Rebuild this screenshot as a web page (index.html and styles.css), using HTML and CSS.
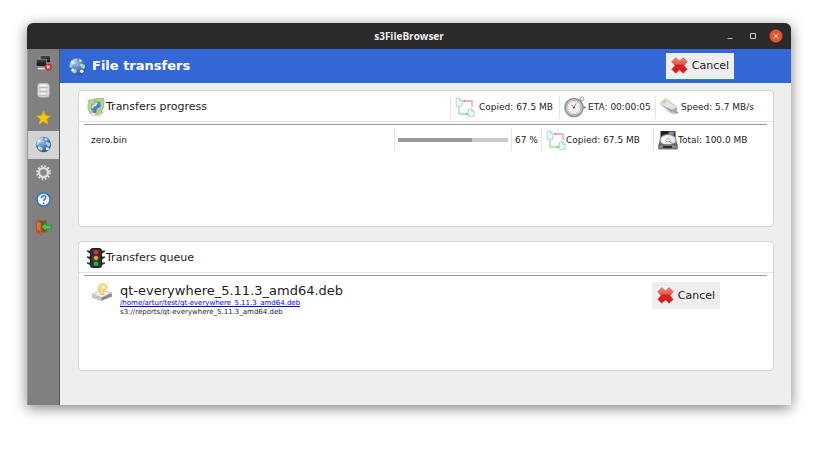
FILE: index.html
```html
<!DOCTYPE html>
<html lang="en">
<head>
<meta charset="utf-8">
<title>s3FileBrowser</title>
<link rel="stylesheet" href="styles.css">
</head>
<body>
<svg class="defs" aria-hidden="true">
  <defs>
    <radialGradient id="globeFill" cx=".4" cy=".3" r=".7"><stop offset="0" stop-color="#9fc0e0"/><stop offset=".6" stop-color="#4a7db5"/><stop offset="1" stop-color="#2a568b"/></radialGradient>
    <linearGradient id="redFill" x1="0" y1="0" x2="0" y2="1"><stop offset="0" stop-color="#f08070"/><stop offset=".42" stop-color="#e55a4c"/><stop offset=".46" stop-color="#e01c20"/><stop offset="1" stop-color="#d81c24"/></linearGradient>
    <linearGradient id="metal" x1="0" y1="0" x2="0" y2="1"><stop offset="0" stop-color="#fafafa"/><stop offset="1" stop-color="#a5a5a5"/></linearGradient>
    <linearGradient id="screen" x1="0" y1="0" x2="0" y2="1"><stop offset="0" stop-color="#4a4a4a"/><stop offset="1" stop-color="#0c0c0c"/></linearGradient>
  </defs>
  <symbol id="globe" viewBox="0 0 20 20">
    <circle cx="10" cy="10" r="9" fill="url(#globeFill)"/>
    <path d="M2 7Q4 2 9 1.600L9.500 3.200 7.500 4.800 8 7 5.500 8.200 4 11 1.500 10.500zM12 8L14.500 7 17.800 8.500 18 11 16 13 14.500 11.500zM4.500 12.500L8 13 9.500 15 7.500 17.700Q4.500 16.500 3 14.500z" fill="#d0e1ef" opacity=".75"/>
    <path d="M12 2.200l3 1.500-1.500 1.600-2-.6z" fill="#eef5fb" opacity=".8"/>
    <circle cx="4.500" cy="5.500" r="1.500" fill="#fff" opacity=".8"/><circle cx="14.500" cy="15" r="1.900" fill="#fff" opacity=".95"/><circle cx="5" cy="13.500" r="1.400" fill="#fff" opacity=".8"/>
  </symbol>
  <symbol id="cross" viewBox="0 0 18 18"><path d="M.8 5L5 .8 9 4.200 13 .8 17.200 5 13.800 9 17.200 13 13 17.200 9 13.800 5 17.200 .8 13 4.200 9z" fill="url(#redFill)" stroke="#c63c3c" stroke-width=".6" stroke-linejoin="round"/></symbol>
  <symbol id="copy" viewBox="0 0 20 20">
    <path d="M8 4H17V10" fill="none" stroke="#f59a9a" stroke-width="1.300"/><path d="M7.500 4l2.500-1.600v3.200z" fill="#ee8585"/>
    <path d="M4 9.500V17H12" fill="none" stroke="#92e592" stroke-width="1.300"/><path d="M13.500 17L11 15.300v3.400z" fill="#74d874"/>
    <path d="M1.200 1.200H4.500L7 3.500V9.200H1.200zM4.500 1.200V3.800H7M13.500 11.800H16.700L19.200 14V19.300H13.500zM16.700 11.800V14.300H19.200" fill="#f6fbff" stroke="#a3d2f4" stroke-width="1"/>
  </symbol>
</svg>
<div class="window">
  <header class="titlebar">
    <span></span>
    <span class="caption">s3FileBrowser</span>
    <div class="controls">
      <button aria-label="Minimize"><svg viewBox="0 0 14 14"><path d="M4.500 9.500h5" stroke="#bbb"/></svg></button>
      <button aria-label="Maximize"><svg viewBox="0 0 14 14"><path d="M4.500 4.500h5v5h-5z" fill="none" stroke="#ccc"/></svg></button>
      <button aria-label="Close"><svg viewBox="0 0 14 14"><circle cx="7" cy="7" r="6.500" fill="#e9542a"/><path d="M4.700 4.700l4.600 4.600M9.300 4.700L4.700 9.300" stroke="#fff"/></svg></button>
    </div>
  </header>
  <div class="workspace">
    <nav class="sidebar">
      <button aria-label="Disconnect"><svg viewBox="0 0 18 18"><path d="M5.500 1.500h11v7.700h-11z" fill="url(#screen)" stroke="#aaa" stroke-width=".7"/><path d="M9 10h6v2H9z" fill="#bbb"/><path d="M1.300 5.500h11v7.500h-11z" fill="url(#screen)" stroke="#a5a5a5" stroke-width=".7"/><path d="M3 14.500h9v1.800H3z" fill="#ddd"/><circle cx="14" cy="13.800" r="3.700" fill="#c92e21"/><path d="M12.600 12.400l2.800 2.800M15.400 12.400l-2.800 2.800" stroke="#fff" stroke-width="1.200"/></svg></button>
      <button aria-label="Storage"><svg viewBox="0 0 18 18"><rect x="3" y="1.500" width="12" height="14.500" rx="2.500" fill="#dcdcdc" stroke="#c4c4c4" stroke-width=".7"/><path d="M4.500 6h9M4.500 10.300h9M4.500 14.500h9" fill="none" stroke="#b2b2b2"/><path d="M5.500 3.500h7M6.500 7.500h5M6.500 12h5" stroke="#fff"/></svg></button>
      <button aria-label="Bookmarks"><svg viewBox="0 0 18 18"><path d="M9 1.800L11.100 6.900 16.500 7.300 12.400 10.900 13.700 16.200 9 13.300 4.300 16.200 5.600 10.900 1.500 7.300 6.900 6.900z" fill="#f4c414" stroke="#d7a800" stroke-width=".5"/></svg></button>
      <button class="active" aria-label="File transfers"><svg><use href="#globe"/></svg></button>
      <button aria-label="Settings"><svg viewBox="0 0 18 18"><circle cx="9" cy="9" r="6.700" fill="none" stroke="#e4e4e4" stroke-width="2.200" stroke-dasharray="1.900 1.600"/><circle cx="9" cy="9" r="4.700" fill="none" stroke="#dfdfdf" stroke-width="2.400"/><circle cx="9" cy="9" r="3.200" fill="#858585" stroke="#aaa" stroke-width=".6"/></svg></button>
      <button aria-label="Help"><svg viewBox="0 0 18 18"><circle cx="9" cy="9" r="6.900" fill="#f8fbff" stroke="#3771ce" stroke-width="1.700"/><path d="M6.800 7.300Q6.800 5 9.100 5T11.300 7Q11.300 8.200 10 9 9 9.700 9 10.700" fill="none" stroke="#3973c9" stroke-width="1.600"/><circle cx="9" cy="12.900" r="1" fill="#3973c9"/></svg></button>
      <button aria-label="Exit"><svg viewBox="0 0 18 18"><path d="M2 1.500H12V14H2z" fill="#665849" stroke="#986035"/><path d="M1.500 1.500L6.500 4.500V17L1.500 13.800z" fill="#d9742c" stroke="#a94e20" stroke-width=".7"/><path d="M2.500 11l3 2v2.500l-3-2z" fill="#bd4620"/><path d="M7 8.300L11.500 4V6.700H17.300V10.500H11.500V12.800z" fill="#48cc48" stroke="#198c29" stroke-width=".7"/></svg></button>
    </nav>
    <main class="main">
      <div class="banner">
        <svg><use href="#globe"/></svg>
        <h1>File transfers</h1>
        <button class="cancel cancel-all"><svg><use href="#cross"/></svg>Cancel</button>
      </div>
      <div class="panels">
        <section class="panel">
          <div class="panel-head">
            <svg class="head-icon" viewBox="0 0 20 20"><ellipse cx="10" cy="18.300" rx="6.500" ry="1.200" fill="#ddd"/><circle cx="9.500" cy="9.700" r="6.500" fill="#4c80b4"/><path d="M7 7l3-2 2 1-2 3-2 .5-1 2-2-1zM11 12l3-2 1 1-2 3-3 1z" fill="#cfe0e8"/><path d="M4.500 17Q0 11 3 5L1.500 3.500 9 2 8 7.500 6 6.500Q3.500 10 7 15zM9 2Q14 .5 18 1.500L17.500 4Q19 10 15.500 14.500L17 16 9.500 18 11 12.500 13 13.500Q15.500 9 14 5Q11 4 9 5z" fill="#b0d494" stroke="#8ab16f" stroke-width=".6"/></svg>
            <h2>Transfers progress</h2>
            <div class="cell sum-copied"><svg><use href="#copy"/></svg>Copied: 67.5 MB</div>
            <div class="cell sum-eta"><svg viewBox="0 0 22 22"><path d="M16 4l2-1" stroke="#aaa" stroke-width="2"/><circle cx="18.500" cy="3" r="2" fill="#eee" stroke="#aaa"/><path d="M20 11.500h2" stroke="#555" stroke-width="1.600"/><circle cx="10.500" cy="11.500" r="9" fill="#ddd" stroke="#8c8c8c" stroke-width="1.500"/><circle cx="10.500" cy="11.500" r="7.200" fill="#f1f0ee" stroke="#aaa"/><circle cx="10.500" cy="11.500" r="5.700" fill="none" stroke="#aaa" stroke-dasharray=".7 2.280"/><path d="M7.500 8.500l3 3 2-4" fill="none" stroke="#c98a74"/><circle cx="10.500" cy="11.500" r="1" fill="#733"/></svg>ETA: 00:00:05</div>
            <div class="cell sum-speed"><svg viewBox="0 0 20 20"><path d="M5 13l9 5 5-3-7-2z" fill="#aaa" opacity=".5"/><path d="M1 5.500Q3 2.500 6.500 2L17 10.500 16.500 14 12 15.500 1.500 8z" fill="#e4e4e4" stroke="#aaa" stroke-width=".7"/><path d="M1.500 8L12 15.500 16.500 14 17 10.500 12 12.500z" fill="#aaa"/><path d="M14 14.500l4 1.500" stroke="#999" stroke-width="1.400"/><path d="M2.500 5L5 3l2 1.700-2.500 2.100z" fill="#f3c263"/></svg>Speed: 5.7 MB/s</div>
          </div>
          <div class="panel-body">
            <div class="transfer">
              <span class="file">zero.bin</span>
              <div class="cell job-bar"><progress value="67" max="100" aria-label="zero.bin progress"></progress></div>
              <div class="cell job-percent">67 %</div>
              <div class="cell job-copied"><svg><use href="#copy"/></svg>Copied: 67.5 MB</div>
              <div class="cell job-total"><svg viewBox="0 0 20 20"><path d="M2.500 1h15v8h-15z" fill="#202124"/><path d="M11 1.500h6l-2 5h-5z" fill="#7890ac"/><path d="M2.500 7L.7 15h18.600l-2-8z" fill="#666"/><ellipse cx="10" cy="10" rx="8" ry="5.500" fill="#ececec" stroke="#888"/><path d="M5 12Q5 8 9 8" stroke="#fff" stroke-width="2" fill="none"/><ellipse cx="10" cy="10.300" rx="2.300" ry="1.500" fill="#fff" stroke="#999" stroke-width=".8"/><path d="M11 11l4 3" stroke="#777"/><path d="M.7 14.800h18.600V19H.7z" fill="#888" stroke="#555" stroke-width=".8"/><path d="M5 17h9" stroke="#222" stroke-width="1.800"/></svg>Total: 100.0 MB</div>
            </div>
          </div>
        </section>
        <section class="panel">
          <div class="panel-head">
            <svg class="head-icon" viewBox="0 0 20 20"><path d="M1 3h4v3zM1 9h4v3zM1 15h4v2zM19 3h-4v3zM19 9h-4v3zM19 15h-4v2z" fill="#292929" stroke="#333"/><rect x="4.500" y=".5" width="11" height="19" rx="2" fill="#333" stroke="#1c1c1c"/><circle cx="10" cy="4.300" r="2.300" fill="#e62b2b"/><circle cx="10" cy="10" r="2.300" fill="#e3a02a"/><circle cx="10" cy="15.800" r="2.300" fill="#16bd45"/></svg>
            <h2>Transfers queue</h2>
          </div>
          <div class="panel-body">
            <div class="queued">
              <svg class="upload" viewBox="0 0 22 20"><path d="M1 12.500L9 8.500 20.500 10.700 21 14.500 10.500 18.800 1 15.500z" fill="#888"/><path d="M1 12.200L10 8 20.500 10.700 10.500 15.500z" fill="#f0f0f0" stroke="#bbb" stroke-width=".6"/><path d="M1 12.500L10.500 15.700V18.700L1 15.500z" fill="#c8c8c8"/><path d="M9 12.500V8H7Q6.500 2 12 1.700 17 2 16.300 6 15.500 8.500 12.800 8V12.500z" fill="#f8dc86" stroke="#e9b552" stroke-width=".7"/><circle cx="12.500" cy="5" r="1.700" fill="#fff5cc"/><circle cx="13.500" cy="16" r=".7" fill="#57a857"/></svg>
              <div class="details">
                <h3>qt-everywhere_5.11.3_amd64.deb</h3>
                <a href="#">/home/artur/test/qt-everywhere_5.11.3_amd64.deb</a>
                <span>s3://reports/qt-everywhere_5.11.3_amd64.deb</span>
              </div>
              <button class="cancel"><svg><use href="#cross"/></svg>Cancel</button>
            </div>
          </div>
        </section>
      </div>
    </main>
  </div>
</div>
</body>
</html>
```
FILE: styles.css
```css
* { box-sizing: border-box; }

body {
  display: flex;
  min-height: 100vh;
  margin: 0;
  padding: 23px 28px 48px 27px;
  background: #fff;
  color: #1c1c1c;
  font: 9px/12px "DejaVu Sans", sans-serif;
}

h1, h2, h3 { margin: 0; font-weight: normal; }
button { padding: 0; border: 0; background: none; color: inherit; font: inherit; }
svg { display: block; flex: none; }
.defs { position: absolute; width: 0; height: 0; }

.window {
  flex: 1;
  display: flex;
  flex-direction: column;
  border-radius: 6px 6px 0 0;
  background: #eee;
  box-shadow: 0 3px 14px rgba(0, 0, 0, .5);
}

.titlebar {
  display: grid;
  grid-template-columns: 1fr auto 1fr;
  align-items: center;
  height: 26px;
  padding: 0 8px;
  border-radius: 6px 6px 0 0;
  background: #2b2929;
  color: #eee;
}
.caption { font: bold 10px/12px "Open Sans", sans-serif; }
.controls { display: flex; justify-content: flex-end; gap: 9px; }
.controls svg { width: 14px; height: 14px; }

.workspace { flex: 1; display: flex; }

.sidebar {
  display: grid;
  grid-template-rows: repeat(7, 1fr);
  flex: none;
  width: 33px;
  padding-bottom: 164px;
  border-right: 1px solid #555;
  border-left: 1px solid #999;
  background: #808080;
}
.sidebar button { display: grid; place-items: center; }
.sidebar svg { width: 17px; height: 17px; }
.sidebar .active { background: #d3d3d3; }

.main { flex: 1; display: flex; flex-direction: column; min-width: 0; }

.banner {
  display: flex;
  align-items: center;
  gap: 5px;
  height: 34px;
  padding: 0 57px 0 8px;
  background: #3367d6;
  color: #fff;
}
.banner > svg { width: 19px; height: 19px; }
.banner h1 { flex: 1; font-size: 13px; font-weight: bold; line-height: 16px; }

.cancel {
  display: flex;
  align-items: center;
  gap: 4px;
  flex: none;
  height: 27px;
  padding: 0 5px;
  background: #eee;
  color: #222;
  font-size: 11px;
}
.cancel svg { width: 17px; height: 17px; }
.cancel-all { border-bottom: 1px solid #269a6a; }

.panels { display: flex; flex-direction: column; gap: 14px; padding: 7px 17px 34px 18px; flex: 1; }
.panel {
  flex: 1;
  min-height: 130px;
  border: 1px solid #d4d4d4;
  border-radius: 4px;
  background: #fff;
}
.panel:first-child { min-height: 137px; }

.panel-head {
  display: flex;
  align-items: center;
  height: 31px;
  padding: 2px 7px 0;
  border-bottom: 1px solid #e5e5e5;
}
.head-icon { width: 20px; height: 20px; }
.panel-head h2 { flex: 1; font-size: 11px; line-height: 16px; }

.panel-body { margin: 2px 6px 0 5px; border-top: 1px solid #999; }

.cell {
  display: flex;
  align-items: center;
  flex: none;
  height: 23px;
  border-left: 1px solid #e5e5e5;
  white-space: nowrap;
}
.cell svg { width: 20px; height: 20px; }
.sum-copied { gap: 4px; width: 109px; padding-left: 4px; }
.sum-eta { gap: 2px; width: 96px; padding-left: 3px; }
.sum-eta svg { width: 23px; height: 22px; }
.sum-speed { gap: 1px; width: 111px; padding-left: 4px; }

.transfer { display: flex; align-items: center; padding-top: 3px; }
.file { flex: 1; padding-left: 7px; }
.job-bar { width: 117px; padding: 0 3px; }
.job-percent { width: 30px; padding-left: 3px; }
.job-copied { width: 112px; padding-left: 4px; }
.job-total { width: 114px; padding-left: 4px; }

progress {
  appearance: none;
  width: 100%;
  height: 4px;
  border: 0;
  background: #c9c9c9;
}
progress::-webkit-progress-bar { background: #c9c9c9; }
progress::-webkit-progress-value { background: #999; }
progress::-moz-progress-bar { background: #999; }

.queued { display: flex; align-items: flex-start; gap: 7px; padding: 6px 47px 0 7px; }
.upload { width: 22px; height: 20px; }
.details { flex: 1; display: flex; flex-direction: column; align-items: flex-start; font-size: 7px; line-height: 9px; }
.details h3 { font-size: 13px; line-height: 17px; }
.details a { color: #00f; }
```
